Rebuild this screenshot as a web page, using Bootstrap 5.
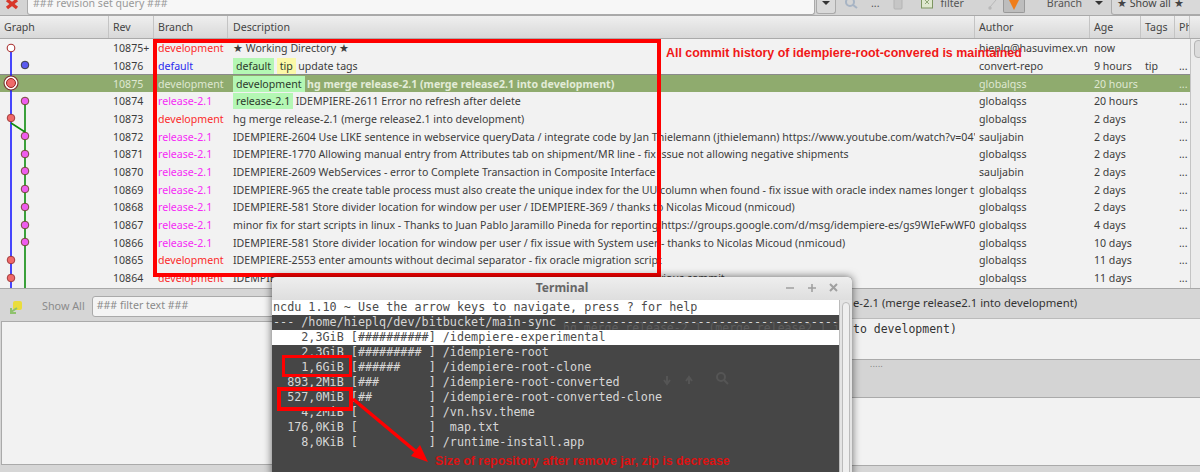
<!doctype html>
<html><head><meta charset="utf-8">
<link href="https://cdn.jsdelivr.net/npm/bootstrap@5.3.0/dist/css/bootstrap.min.css" rel="stylesheet">
<style>
html,body{margin:0;height:472px;overflow:hidden;background:#d6d6d6}
body{width:1200px;position:relative;font-family:"Noto Sans","Open Sans",sans-serif;font-size:10.6px;color:#3c3c3c;line-height:1.2}
.topbar{height:16px;background:#d4d4d4;border-bottom:1px solid #a9a9a9;overflow:hidden;align-items:flex-start}
.topbar svg{flex:none;display:block}
.topbar .tt{flex:none;line-height:7px;color:#555;white-space:nowrap}
.xic{margin-left:5px;margin-right:8px}
.qbox{height:15px;width:788px;flex:none;background:#f7f7f7;border:1px solid #aaa;border-top:0;border-radius:0 0 3px 3px;color:#999;padding-left:5px;line-height:7px}
.dropb{width:20px;height:14px;flex:none;margin-left:1px;background:#d9d9d9;border:1px solid #aaa;border-top:0;border-radius:0 0 3px 3px}
.dropb svg{margin:0 auto}
.m-lens{margin-left:9px}.m-dots{margin-left:12px}.m-can{margin-left:13px}.m-chk{margin-left:18px}.m-filter{margin-left:8px}.m-net{margin-left:23px}.m-org{margin-left:5px}.m-branch{margin-left:22px}.m-arr1{margin-left:13px}
.orgb{width:22px;height:13px;flex:none;background:#bdbdbd;border:1px solid #999;border-top:0;border-radius:0 0 2px 2px}
.orgb svg{margin:0 auto}
.showb{margin-left:7px;width:90px;height:15px;flex:none;background:#d9d9d9;border:1px solid #aaa;border-top:0;border-radius:0 0 0 3px;padding-left:5px;line-height:7px;color:#444;display:flex;white-space:nowrap}
.showb svg{margin-left:21px;margin-top:0}
.hdr{height:23px;background:linear-gradient(#efefef,#d8d8d8);border-bottom:1px solid #aaa}
.hdr>div{border-right:1px solid #c4c4c4;padding:5px 0 0 4px;font-size:10.6px;color:#444;flex:none;overflow:hidden}
.cg{width:109px}.cr{width:45px}.cb{width:74px}.cd{width:747px}.ca{width:115px}.cage{width:51px}.ct{width:34px}.cp{width:15px}
.hdr .cd,.rw .cd{padding-left:5px!important}
.gridwrap{height:249px;background:#f2f2f2;position:relative;overflow:hidden}
.rw{height:17.7px;align-items:center;white-space:nowrap;font-size:10.6px}
.rw>div{flex:none;overflow:hidden;padding-left:4px;line-height:16px}
.sel{background:#8fab6e;color:#dfe8d2;height:18px;border-top:1px solid #8a8a8a}
.dev{color:#fb2b2b}.def{color:#2b2bee}.rel{color:#f52cf5}
.sel .dev{color:#dfe8d2}
.tg{background:#b4f7b4;color:#2c3a2c;padding:0 3px;margin-right:2.5px;display:inline-block;line-height:16px;height:16px}
.tg.y{background:#fbf8a8}
.boldd{font-weight:700;color:#e3ecd8}
.sbar{position:absolute;right:0;top:0;width:10px;height:249px;background:#ececec;border-left:1px solid #c4c4c4}
.sthumb{position:absolute;left:3px;top:1px;width:9px;height:18px;background:#dcdcdc;border:1px solid #b5b5b5;border-radius:4px}
.graph{position:absolute;left:0;top:0}
.hilite{position:absolute;left:153px;top:39px;width:508px;height:238px;border:4px solid #f00;z-index:3}
.note1{position:absolute;left:666px;top:46px;color:#f01818;font-weight:700;font-family:"Liberation Sans",sans-serif;font-size:12.42px;z-index:3;white-space:nowrap}
.low{height:184px;background:#d6d6d6;border-top:1px solid #a8a8a8}
.lcol{width:852px;flex:none}
.rcol{flex:1}
.fbar{align-items:flex-start;height:32px;padding-left:8px}
.fbar svg{flex:none;margin-top:10px}
.sa{color:#8b8b8b;margin-left:18px;margin-top:11px;font-size:10.8px}
.fi{margin-left:7px;margin-top:7px;width:300px;height:21px;background:#f4f4f4;border:1px solid #aaa;border-radius:3px;color:#8a8a8a;padding:2px 4px;font-size:10.6px}
.pbox{background:#f2f2f2;border:1px solid #aaa;height:144px;margin:0 0 0 1px}
.rtitle{height:29px;color:#333;font-size:11.3px;white-space:nowrap;padding:7px 0 0 1px}
.rmsg{height:42px;background:#f1f1f1;border-top:1px solid #bbb;border-bottom:1px solid #aaa;font-family:"DejaVu Sans Mono",monospace;font-size:11.5px;padding:4px 0 0 1px;color:#333}
.rtools{height:38px;background:#d4d4d4;border-bottom:1px solid #aaa;font-size:8px;color:#777;letter-spacing:.5px;line-height:8px;padding-left:18px}
.rblank{height:68px;background:#f2f2f2;border-bottom:1px solid #aaa}
.term{position:absolute;left:272px;top:277px;width:580px;height:200px;background:#464646;border-radius:4px 4px 0 0;box-shadow:0 0 8px rgba(0,0,0,.6);z-index:5;overflow:hidden}
.ttl{height:23px;background:linear-gradient(#eeeeee,#dedede);text-align:center;font-weight:700;color:#666;font-size:12px;line-height:22px;position:relative}
.wbtns{position:absolute;left:514px;top:5px}
.scr{position:absolute;right:0;top:23px;width:13px;bottom:0;background:#e4e4e4;border-left:1px solid #bbb}
.thumb{position:absolute;left:2px;top:2px;width:8px;bottom:0;border:1px solid #bbb;border-radius:5px;background:#efefef}
.ln{font-family:"DejaVu Sans Mono",monospace;font-size:11.76px;line-height:15px;height:15px;white-space:pre;color:#d6d6d6;padding-left:1px;width:567px;overflow:hidden}
.ln.w{background:#fff;color:#4b4b4b}
.ghost{position:absolute;left:388px;top:93px}
.ghtxt{position:absolute;left:291px;top:44px;height:9px;width:276px;overflow:hidden;white-space:pre;font-family:"DejaVu Sans Mono",monospace;font-size:11.5px;line-height:15px;color:#5c5c5c}
.tbox{position:absolute;border:3px solid #f00;z-index:6}
.b1{left:282px;top:355px;width:70px;height:22px}
.b2{left:277px;top:387px;width:76px;height:24px;border-width:4px}
.note2{position:absolute;left:435px;top:454px;color:#dc1212;font-weight:700;font-family:"Liberation Sans",sans-serif;font-size:12.4px;z-index:6;white-space:nowrap}
.arrow{position:absolute;left:0;top:0;z-index:6}
</style></head><body>
<div class="topbar d-flex">
<svg class="xic" width="14" height="12"><path d="M2 0 L12 8 M12 0 L2 8" stroke="#d8372a" stroke-width="3.4"/></svg>
<div class="qbox">### revision set query ###</div>
<div class="dropb"><svg width="9" height="6"><path d="M0 1h8l-4 4z" fill="#333"/></svg></div>
<svg class="m-lens" width="14" height="11"><circle cx="5" cy="2" r="4" fill="none" stroke="#a7b4c4" stroke-width="2"/><path d="M8 5l4 3" stroke="#a7b4c4" stroke-width="2"/></svg>
<span class="tt m-dots">...</span>
<svg class="m-can" width="10" height="10"><rect x="1" y="-3" width="8" height="12" rx="1" fill="#c6c6c6" stroke="#b4b4b4"/></svg>
<svg class="m-chk" width="12" height="9"><rect x=".5" y="-3" width="11" height="11" fill="#dfe8cf" stroke="#7d9561"/><path d="M4 0l4 4M8 0L4 4" stroke="#8fa777"/></svg>
<span class="tt m-filter">filter</span>
<svg class="m-net" width="11" height="10"><circle cx="3" cy="8" r="1.700" fill="#b8b8b8"/><path d="M3 7L9 0" stroke="#b8b8b8"/></svg>
<div class="orgb m-org"><svg width="12" height="11"><path d="M1 0h10L6 10z" fill="#ef7d1a"/></svg></div>
<span class="tt m-branch">Branch</span>
<svg class="m-arr1" width="9" height="6"><path d="M0 1h8l-4 4z" fill="#333"/></svg>
<div class="showb">★ Show all ★<svg width="9" height="6"><path d="M0 1h8l-4 4z" fill="#333"/></svg></div>
</div>
<div class="hdr d-flex"><div class="cg">Graph</div><div class="cr">Rev</div><div class="cb">Branch</div><div class="cd">Description</div><div class="ca">Author</div><div class="cage">Age</div><div class="ct">Tags</div><div class="cp">Ph</div></div>
<div class="gridwrap">
<div class="rw d-flex"><div class="cg"></div><div class="cr">10875+</div><div class="cb dev">development</div><div class="cd">★ Working Directory ★</div><div class="ca">hieplq@hasuvimex.vn</div><div class="cage">now</div><div class="ct"></div><div class="cp"></div></div>
<div class="rw d-flex"><div class="cg"></div><div class="cr">10876</div><div class="cb def">default</div><div class="cd"><span class="tg">default</span><span class="tg y">tip</span>update tags</div><div class="ca">convert-repo</div><div class="cage">9 hours</div><div class="ct">tip</div><div class="cp">...</div></div>
<div class="rw d-flex sel"><div class="cg"></div><div class="cr">10875</div><div class="cb dev">development</div><div class="cd"><span class="tg">development</span><span class="boldd">hg merge release-2.1 (merge release2.1 into development)</span></div><div class="ca">globalqss</div><div class="cage">20 hours</div><div class="ct"></div><div class="cp">...</div></div>
<div class="rw d-flex"><div class="cg"></div><div class="cr">10874</div><div class="cb rel">release-2.1</div><div class="cd"><span class="tg">release-2.1</span>IDEMPIERE-2611 Error no refresh after delete</div><div class="ca">globalqss</div><div class="cage">20 hours</div><div class="ct"></div><div class="cp">...</div></div>
<div class="rw d-flex"><div class="cg"></div><div class="cr">10873</div><div class="cb dev">development</div><div class="cd">hg merge release-2.1 (merge release2.1 into development)</div><div class="ca">globalqss</div><div class="cage">2 days</div><div class="ct"></div><div class="cp">...</div></div>
<div class="rw d-flex"><div class="cg"></div><div class="cr">10872</div><div class="cb rel">release-2.1</div><div class="cd">IDEMPIERE-2604 Use LIKE sentence in webservice queryData / integrate code by Jan Thielemann (jthielemann) https://www.youtube.com/watch?v=04'</div><div class="ca">sauljabin</div><div class="cage">2 days</div><div class="ct"></div><div class="cp">...</div></div>
<div class="rw d-flex"><div class="cg"></div><div class="cr">10871</div><div class="cb rel">release-2.1</div><div class="cd">IDEMPIERE-1770 Allowing manual entry from Attributes tab on shipment/MR line - fix issue not allowing negative shipments</div><div class="ca">globalqss</div><div class="cage">2 days</div><div class="ct"></div><div class="cp">...</div></div>
<div class="rw d-flex"><div class="cg"></div><div class="cr">10870</div><div class="cb rel">release-2.1</div><div class="cd">IDEMPIERE-2609 WebServices - error to Complete Transaction in Composite Interface</div><div class="ca">sauljabin</div><div class="cage">2 days</div><div class="ct"></div><div class="cp">...</div></div>
<div class="rw d-flex"><div class="cg"></div><div class="cr">10869</div><div class="cb rel">release-2.1</div><div class="cd">IDEMPIERE-965 the create table process must also create the unique index for the UU column when found - fix issue with oracle index names longer t</div><div class="ca">globalqss</div><div class="cage">2 days</div><div class="ct"></div><div class="cp">...</div></div>
<div class="rw d-flex"><div class="cg"></div><div class="cr">10868</div><div class="cb rel">release-2.1</div><div class="cd">IDEMPIERE-581 Store divider location for window per user / IDEMPIERE-369 / thanks to Nicolas Micoud (nmicoud)</div><div class="ca">globalqss</div><div class="cage">2 days</div><div class="ct"></div><div class="cp">...</div></div>
<div class="rw d-flex"><div class="cg"></div><div class="cr">10867</div><div class="cb rel">release-2.1</div><div class="cd">minor fix for start scripts in linux - Thanks to Juan Pablo Jaramillo Pineda for reporting https://groups.google.com/d/msg/idempiere-es/gs9WIeFwWF0</div><div class="ca">globalqss</div><div class="cage">4 days</div><div class="ct"></div><div class="cp">...</div></div>
<div class="rw d-flex"><div class="cg"></div><div class="cr">10866</div><div class="cb rel">release-2.1</div><div class="cd">IDEMPIERE-581 Store divider location for window per user / fix issue with System user - thanks to Nicolas Micoud (nmicoud)</div><div class="ca">globalqss</div><div class="cage">10 days</div><div class="ct"></div><div class="cp">...</div></div>
<div class="rw d-flex"><div class="cg"></div><div class="cr">10865</div><div class="cb dev">development</div><div class="cd">IDEMPIERE-2553 enter amounts without decimal separator - fix oracle migration script</div><div class="ca">globalqss</div><div class="cage">11 days</div><div class="ct"></div><div class="cp">...</div></div>
<div class="rw d-flex"><div class="cg"></div><div class="cr">10864</div><div class="cb dev">development</div><div class="cd">IDEMPIERE-2553 enter amounts without decimal separator - fix wrong script from previous commit</div><div class="ca">globalqss</div><div class="cage">11 days</div><div class="ct"></div><div class="cp">...</div></div>
<div class="sbar"><div class="sthumb"></div></div>
<svg class="graph" width="40" height="249" viewBox="0 0 40 249">
<path d="M11 9V249" stroke="#1a1aff" stroke-width="1.6" fill="none"/>
<path d="M25 62V249M11 84L25 93" stroke="#0d8c0d" stroke-width="1.6" fill="none"/>
<circle cx="11" cy="9" r="3.800" fill="#fff" stroke="#a33" stroke-width="1.1"/>
<circle cx="25" cy="26" r="3.800" fill="#5a5aee" stroke="#333" stroke-width=".9"/>
<circle cx="11" cy="44" r="7" fill="#fff" stroke="#7a3030" stroke-width="1.1"/><circle cx="11" cy="44" r="4.500" fill="#ef6b6b" stroke="#922"/>
<g fill="#ef5cef" stroke="#642" stroke-width=".9"><circle cx="25" cy="62" r="3.800"/><circle cx="25" cy="97" r="3.800"/><circle cx="25" cy="115" r="3.800"/><circle cx="25" cy="132" r="3.800"/><circle cx="25" cy="150" r="3.800"/><circle cx="25" cy="168" r="3.800"/><circle cx="25" cy="186" r="3.800"/><circle cx="25" cy="203" r="3.800"/></g>
<g fill="#f06a6a" stroke="#933" stroke-width=".9"><circle cx="11" cy="79" r="3.800"/><circle cx="11" cy="221" r="3.800"/><circle cx="11" cy="239" r="3.800"/></g>
</svg>
</div>
<div class="low d-flex">
<div class="lcol">
<div class="fbar d-flex"><svg width="16" height="16" viewBox="0 0 16 16"><rect x="5" y="2" width="9" height="9" rx="2" fill="#eadd3c"/><path d="M9 9L3 13M3 9v5h5" stroke="#8fc26e" stroke-width="2" fill="none"/></svg><span class="sa">Show All</span><div class="fi">### filter text ###</div></div>
<div class="pbox"></div>
</div>
<div class="rcol">
<div class="rtitle">e-2.1 (merge release2.1 into development)</div>
<div class="rmsg">to development)</div>
<div class="rtools">.....</div>
<div class="rblank"></div>
</div>
</div>
<div class="hilite"></div>
<div class="note1">All commit history of idempiere-root-convered is maintained</div>
<div class="term">
<div class="ttl">Terminal<svg class="wbtns" width="60" height="12"><path d="M0 6h8M22 6h8M26 2v8" stroke="#a0a0a0" stroke-width="1.600"/><path d="M44 2l7 7M51 2l-7 7" stroke="#a0a0a0" stroke-width="2"/></svg></div>
<div class="scr"><div class="thumb"></div></div>
<div class="ln w">ncdu 1.10 ~ Use the arrow keys to navigate, press ? for help</div>
<div class="ln">--- /home/hieplq/dev/bitbucket/main-sync ---------------------------------------------</div>
<div class="ln w">    2,3GiB [##########] /idempiere-experimental</div>
<div class="ln">    2,3GiB [######### ] /idempiere-root</div>
<div class="ln">    1,6GiB [######    ] /idempiere-root-clone</div>
<div class="ln">  893,2MiB [###       ] /idempiere-root-converted</div>
<div class="ln">  527,0MiB [##        ] /idempiere-root-converted-clone</div>
<div class="ln">    4,2MiB [          ] /vn.hsv.theme</div>
<div class="ln">  176,0KiB [          ]  map.txt</div>
<div class="ln">    8,0KiB [          ] /runtime-install.app</div>
<div class="ghtxt">hg merge release-2.1 (merge release2.1 in</div>
<svg class="ghost" width="80" height="20"><path d="M7 6v7M4 10l3 4 3-4M29 14V7M26 11l3-4 3 4" stroke="#555" stroke-width="2" fill="none"/><circle cx="61" cy="7" r="4" fill="none" stroke="#555" stroke-width="2"/><path d="M64 10l4 4" stroke="#555" stroke-width="2"/></svg>
</div>
<div class="tbox b1"></div>
<div class="tbox b2"></div>
<svg class="arrow" width="1200" height="472"><path d="M353 399L420 455" stroke="#f00" stroke-width="3.500"/><path d="M428 462L411 456L420 445Z" fill="#f00"/></svg>
<div class="note2">Size of repository after remove jar, zip is decrease</div>
</body></html>
